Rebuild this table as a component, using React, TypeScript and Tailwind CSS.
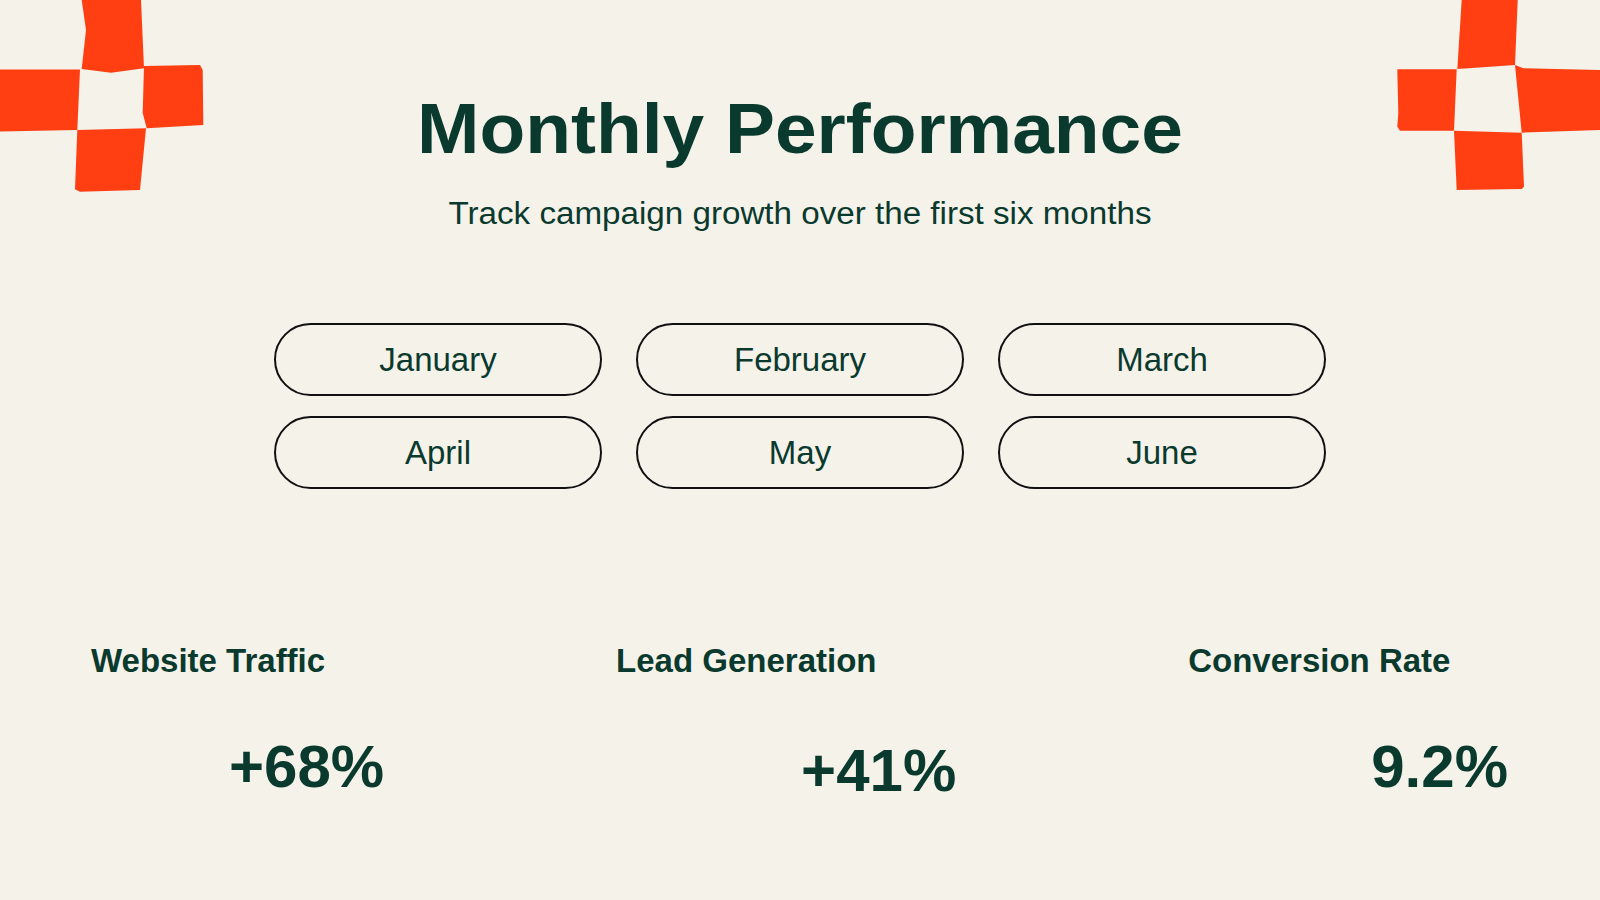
const months = ['January', 'February', 'March', 'April', 'May', 'June'];

const stats = [
    { label: 'Website Traffic', value: '+68%', offset: 'ml-[138px] mt-[60px]' },
    { label: 'Lead Generation', value: '+41%', offset: 'ml-[185px] mt-[64px]' },
    { label: 'Conversion Rate', value: '9.2%', offset: 'ml-[183px] mt-[60px]' },
];

function LeftCross() {
    return (
        <svg className="absolute top-0 left-0" width="210" height="200" viewBox="0 0 210 200">
            <g fill="#FF3F12">
                <polygon points="81.7,0 141,0 144,68.3 111,72.7 81.7,69 86,30" />
                <polygon points="0,69.5 80,69.5 77.3,130 0,131.5" />
                <polygon points="144,66 200,65 202.7,70 203.3,125 146.7,128.3 142.7,113" />
                <polygon points="77.3,130 146,128.3 140,190 80,191.7 75,189.3" />
            </g>
        </svg>
    );
}

function RightCross() {
    // x coordinates are relative to x=1390 on the page
    return (
        <svg className="absolute top-0 right-0" width="210" height="200" viewBox="0 0 210 200">
            <g fill="#FF3F12">
                <polygon points="71.7,0 127.7,0 125,65 67.3,69" />
                <polygon points="7.3,69.3 66.7,69.3 64,130.7 10,130.7 7.3,126.7 8.3,113" />
                <polygon points="125,65 133.3,68.3 210,70 210,130 131.7,132.7" />
                <polygon points="64,130.7 131.7,132.7 134,186.7 131.7,189 66.7,190" />
            </g>
        </svg>
    );
}

export default function App() {
    return (
        <div
            className="relative w-full h-[900px] overflow-hidden bg-[#F5F2EA] text-[#0A3A2E]"
            style={{ fontFamily: '"Liberation Sans", Arial, sans-serif' }}
        >
            <LeftCross />
            <RightCross />

            {/* Header */}
            <header className="flex flex-col items-center pt-[94px] scale-x-[1.07]">
                <h1 className="text-[70px] leading-none font-bold">Monthly Performance</h1>
                <p className="mt-[34px] text-[31px] leading-none">Track campaign growth over the first six months</p>
            </header>

            {/* Months */}
            <div className="mx-auto mt-[94px] grid w-[1052px] grid-cols-3 gap-x-[34px] gap-y-[20px]">
                {months.map((month) => (
                    <div
                        key={month}
                        className="flex h-[73px] items-center justify-center rounded-full border-2 border-[#111111] text-[33px] leading-none"
                    >
                        {month}
                    </div>
                ))}
            </div>

            {/* Stats */}
            <div className="mt-[155px] flex items-start justify-between pl-[91px] pr-[92px]">
                {stats.map((stat) => (
                    <div key={stat.label} className="flex flex-col items-start">
                        <h3 className="text-[33px] leading-none font-bold whitespace-nowrap">{stat.label}</h3>
                        <div className={`${stat.offset} text-[60px] leading-none font-bold`}>{stat.value}</div>
                    </div>
                ))}
            </div>
        </div>
    );
}
